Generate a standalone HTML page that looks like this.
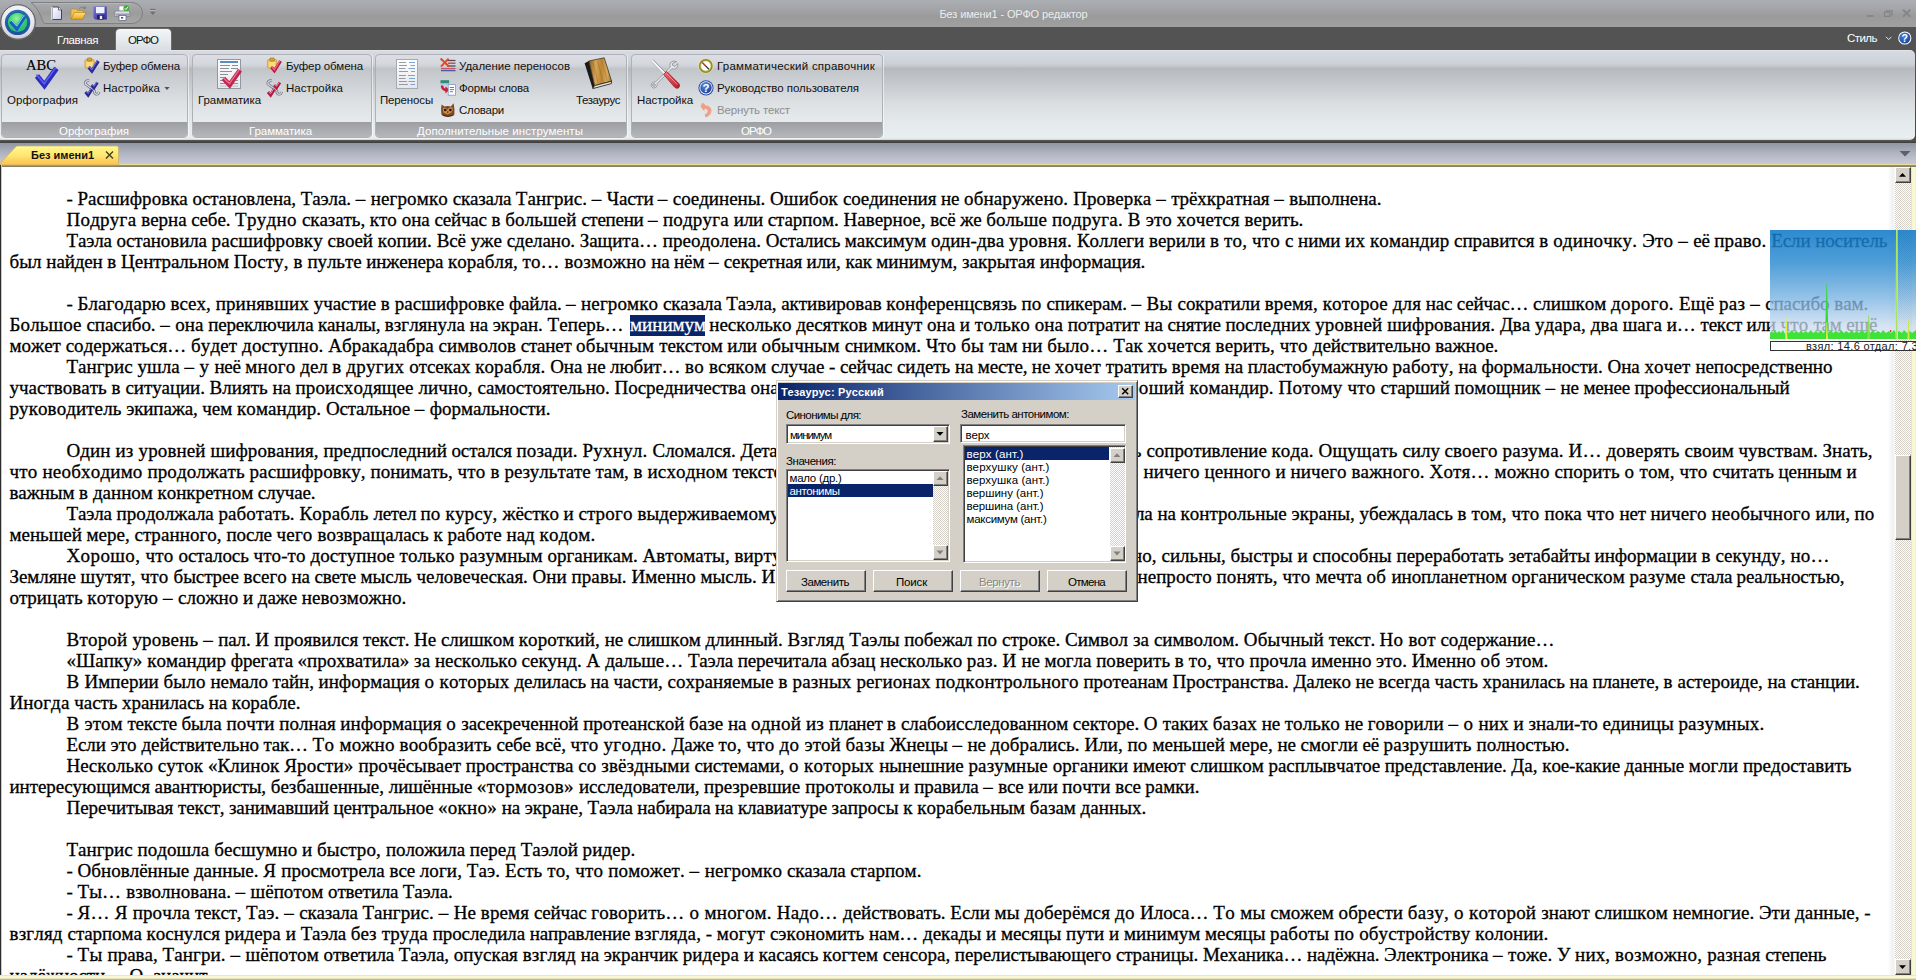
<!DOCTYPE html>
<html lang="ru">
<head>
<meta charset="utf-8">
<title>Без имени1 - ОРФО редактор</title>
<style>
*{box-sizing:border-box}
html,body{margin:0;padding:0}
body{width:1916px;height:980px;overflow:hidden;position:relative;background:#fff;font-family:"Liberation Sans","DejaVu Sans",sans-serif;font-size:11px;color:#000}
.abs{position:absolute}
#title{position:absolute;left:0;top:0;width:1916px;height:27px;background:linear-gradient(#abaeb3 0,#a4a6a9 30%,#9a9a9b 60%,#a0a0a0 100%)}
#band{position:absolute;left:0;top:27px;width:1916px;height:23px;background:#535353}
#ribbon{position:absolute;left:0;top:50px;width:1915px;height:90px;border-radius:0 5px 5px 0;background:linear-gradient(#ececf0 0,#d6dae2 1px,#cdd1d8 13px,#c6cad0 16px,#b6babe 18.5px,#c4c8cd 32px,#d8dcdf 52px,#e4e9eb 72px,#e9eef0 88px,#d0d3d5 90px)}
.grp{position:absolute;top:54px;height:84px;border:1px solid #aeb1b6;border-radius:4px;background:linear-gradient(rgba(255,255,255,.18),rgba(255,255,255,.08));box-shadow:1px 0 0 rgba(255,255,255,.55), 0 1px 0 rgba(255,255,255,.5)}
.grp .lab{position:absolute;left:0;right:0;bottom:0;height:15px;background:linear-gradient(#9c9ea1,#b5b7ba);color:#fff;text-align:center;font-size:11px;line-height:15px;border-radius:0 0 3px 3px}
.rt{position:absolute;white-space:nowrap;font-size:11px;line-height:13px;color:#111}
#sep{position:absolute;left:0;top:140px;width:1916px;height:3px;background:linear-gradient(#5a5a5a,#3a3a3a)}
#strip{position:absolute;left:0;top:143px;width:1916px;height:21px;background:linear-gradient(#9196a3 0,#b1b5c1 50%,#c8cbd6 100%)}
#stripline{position:absolute;left:0;top:164px;width:1916px;height:3px;background:linear-gradient(#efe2a4 0,#e6d796 1px,#9a9273 1px,#878168 2.6px,#f4f2e6 2.6px,#fff 3px)}
#doc{position:absolute;left:0;top:167px;width:1916px;height:813px;background:#fff;overflow:hidden}
.ln{position:absolute;white-space:nowrap;font-family:"Liberation Serif","DejaVu Serif",serif;font-size:19px;line-height:22px;height:22px;color:#000;-webkit-text-stroke:.3px #000;font-kerning:none}
.ln i{display:inline-block;font-style:normal;white-space:nowrap}
.ln b{font-weight:normal;color:#fff;-webkit-text-stroke:.3px #fff;position:relative;left:1.6px}
#sel{position:absolute;left:630px;top:315px;width:75px;height:21px;background:#0a246a}
#lb{position:absolute;left:0;top:165px;width:2px;height:815px;background:linear-gradient(90deg,#2c2c2c 0,#2c2c2c 1.2px,#b8b8b8 1.2px,#e8e8e8 2px)}
#tabact{position:absolute;left:116px;top:29px;width:55px;height:22px;border-radius:4px 4px 0 0;background:linear-gradient(#f4f6f8,#e4e8ec 60%,#d9dde3);box-shadow:0 0 0 1px rgba(255,255,255,.15)}
#ribr{position:absolute;left:1900px;top:49px;width:16px;height:94px;background:linear-gradient(#535353,#484848)}
#dlg{position:absolute;background:#d4d0c8;border:1px solid;border-color:#d4d0c8 #404040 #404040 #d4d0c8;box-shadow:inset 1px 1px 0 #fff, inset -1px -1px 0 #808080}
.b3{position:absolute;background:#d4d0c8;border:1px solid;border-color:#fff #404040 #404040 #fff;box-shadow:inset -1px -1px 0 #808080, inset 1px 1px 0 #d4d0c8}
.sunk{position:absolute;background:#fff;border:1px solid;border-color:#808080 #fff #fff #808080;box-shadow:inset 1px 1px 0 #404040, inset -1px -1px 0 #d4d0c8}
</style>
</head>
<body>
<div id="doc"></div>
<div id="sel"></div>
<div class="ln" id="l0" style="top:188px;left:66.5px;"><i style="width:11.01px;letter-spacing:-0.034px">- </i><i style="width:115.09px;letter-spacing:0.013px">Расшифровка </i><i style="width:108.08px;letter-spacing:-0.096px">остановлена, </i><i style="width:55.04px;letter-spacing:-0.081px">Таэла. </i><i style="width:15.01px;letter-spacing:0.381px">– </i><i style="width:82.06px;letter-spacing:0.129px">негромко </i><i style="width:63.05px;letter-spacing:-0.207px">сказала </i><i style="width:76.06px;letter-spacing:0.051px">Тангрис. </i><i style="width:15.01px;letter-spacing:0.381px">– </i><i style="width:51.04px;letter-spacing:-0.233px">Части </i><i style="width:15.01px;letter-spacing:0.381px">– </i><i style="width:97.07px;letter-spacing:-0.015px">соединены. </i><i style="width:73.06px;letter-spacing:0.198px">Ошибок </i><i style="width:98.07px;letter-spacing:-0.050px">соединения </i><i style="width:23.02px;letter-spacing:-0.111px">не </i><i style="width:109.08px;letter-spacing:0.132px">обнаружено. </i><i style="width:83.06px;letter-spacing:0.114px">Проверка </i><i style="width:15.01px;letter-spacing:0.381px">– </i><i style="width:103.08px;letter-spacing:-0.018px">трёхкратная </i><i style="width:15.01px;letter-spacing:0.381px">– </i><i style="letter-spacing:-0.077px">выполнена.</i></div>
<div class="ln" id="l1" style="top:209px;left:66.5px;"><i style="width:74.82px;letter-spacing:0.244px">Подруга </i><i style="width:49.88px;letter-spacing:-0.063px">верна </i><i style="width:43.89px;letter-spacing:-0.095px">себе. </i><i style="width:66.84px;letter-spacing:0.307px">Трудно </i><i style="width:67.84px;letter-spacing:-0.074px">сказать, </i><i style="width:31.92px;letter-spacing:0.035px">кто </i><i style="width:32.92px;letter-spacing:0.017px">она </i><i style="width:56.86px;letter-spacing:-0.192px">сейчас </i><i style="width:13.97px;letter-spacing:0.122px">в </i><i style="width:75.82px;letter-spacing:0.065px">большей </i><i style="width:66.84px;letter-spacing:-0.252px">степени </i><i style="width:14.96px;letter-spacing:0.357px">– </i><i style="width:70.83px;letter-spacing:0.190px">подруга </i><i style="width:33.92px;letter-spacing:-0.162px">или </i><i style="width:75.82px;letter-spacing:-0.005px">старпом. </i><i style="width:86.79px;letter-spacing:0.013px">Наверное, </i><i style="width:29.93px;letter-spacing:-0.165px">всё </i><i style="width:25.94px;letter-spacing:-0.124px">же </i><i style="width:65.84px;letter-spacing:0.102px">больше </i><i style="width:75.82px;letter-spacing:0.195px">подруга. </i><i style="width:17.96px;letter-spacing:0.267px">В </i><i style="width:30.93px;letter-spacing:0.054px">это </i><i style="width:67.84px;letter-spacing:0.078px">хочется </i><i style="letter-spacing:0.010px">верить.</i></div>
<div class="ln" id="l2" style="top:230px;left:66.5px;"><i style="width:50.03px;letter-spacing:-0.138px">Таэла </i><i style="width:95.05px;letter-spacing:-0.099px">остановила </i><i style="width:116.06px;letter-spacing:0.095px">расшифровку </i><i style="width:50.03px;letter-spacing:-0.038px">своей </i><i style="width:59.03px;letter-spacing:0.043px">копии. </i><i style="width:34.02px;letter-spacing:-0.068px">Всё </i><i style="width:36.02px;letter-spacing:0.052px">уже </i><i style="width:73.04px;letter-spacing:-0.064px">сделано. </i><i style="width:83.05px;letter-spacing:-0.024px">Защита… </i><i style="width:103.06px;letter-spacing:0.023px">преодолена. </i><i style="width:79.04px;letter-spacing:-0.149px">Остались </i><i style="width:86.05px;letter-spacing:-0.060px">максимум </i><i style="width:78.04px;letter-spacing:0.043px">один-два </i><i style="width:68.04px;letter-spacing:0.270px">уровня. </i><i style="width:72.04px;letter-spacing:-0.030px">Коллеги </i><i style="width:61.03px;letter-spacing:-0.063px">верили </i><i style="width:14.01px;letter-spacing:0.143px">в </i><i style="width:28.02px;letter-spacing:0.178px">то, </i><i style="width:33.02px;letter-spacing:0.227px">что </i><i style="width:13.01px;letter-spacing:-0.088px">с </i><i style="width:47.03px;letter-spacing:-0.050px">ними </i><i style="width:25.01px;letter-spacing:0.199px">их </i><i style="width:84.05px;letter-spacing:0.067px">командир </i><i style="width:85.05px;letter-spacing:-0.085px">справится </i><i style="width:14.01px;letter-spacing:0.143px">в </i><i style="width:89.05px;letter-spacing:0.226px">одиночку. </i><i style="width:36.02px;letter-spacing:0.231px">Это </i><i style="width:15.01px;letter-spacing:0.379px">– </i><i style="width:21.01px;letter-spacing:-0.202px">её </i><i style="width:57.03px;letter-spacing:0.137px">право. </i><i style="width:44.02px;letter-spacing:-0.083px">Если </i><i style="letter-spacing:-0.139px">носитель</i></div>
<div class="ln" id="l3" style="top:251px;left:9.5px;"><i style="width:36.87px;letter-spacing:0.052px">был </i><i style="width:60.79px;letter-spacing:-0.143px">найден </i><i style="width:13.95px;letter-spacing:0.115px">в </i><i style="width:112.60px;letter-spacing:-0.045px">Центральном </i><i style="width:59.79px;letter-spacing:0.119px">Посту, </i><i style="width:13.95px;letter-spacing:0.115px">в </i><i style="width:58.79px;letter-spacing:-0.073px">пульте </i><i style="width:81.71px;letter-spacing:-0.163px">инженера </i><i style="width:74.74px;letter-spacing:0.076px">корабля, </i><i style="width:41.85px;letter-spacing:0.075px">то… </i><i style="width:86.69px;letter-spacing:0.183px">возможно </i><i style="width:22.92px;letter-spacing:-0.144px">на </i><i style="width:34.88px;letter-spacing:-0.124px">нём </i><i style="width:14.95px;letter-spacing:0.349px">– </i><i style="width:82.71px;letter-spacing:-0.172px">секретная </i><i style="width:38.86px;letter-spacing:-0.091px">или, </i><i style="width:30.89px;letter-spacing:-0.188px">как </i><i style="width:85.70px;letter-spacing:0.014px">минимум, </i><i style="width:77.73px;letter-spacing:0.007px">закрытая </i><i style="letter-spacing:-0.027px">информация.</i></div>
<div class="ln" id="l4" style="top:293px;left:66.5px;"><i style="width:11.01px;letter-spacing:-0.032px">- </i><i style="width:93.10px;letter-spacing:0.044px">Благодарю </i><i style="width:45.05px;letter-spacing:0.035px">всех, </i><i style="width:98.11px;letter-spacing:0.135px">принявших </i><i style="width:67.07px;letter-spacing:-0.063px">участие </i><i style="width:14.02px;letter-spacing:0.147px">в </i><i style="width:114.13px;letter-spacing:0.022px">расшифровке </i><i style="width:57.06px;letter-spacing:-0.180px">файла. </i><i style="width:15.02px;letter-spacing:0.383px">– </i><i style="width:82.09px;letter-spacing:0.133px">негромко </i><i style="width:63.07px;letter-spacing:-0.204px">сказала </i><i style="width:55.06px;letter-spacing:-0.078px">Таэла, </i><i style="width:105.12px;letter-spacing:-0.024px">активировав </i><i style="width:135.15px;letter-spacing:0.012px">конференцсвязь </i><i style="width:25.03px;letter-spacing:0.203px">по </i><i style="width:85.09px;letter-spacing:-0.080px">спикерам. </i><i style="width:15.02px;letter-spacing:0.383px">– </i><i style="width:31.03px;letter-spacing:0.282px">Вы </i><i style="width:87.10px;letter-spacing:-0.087px">сократили </i><i style="width:58.06px;letter-spacing:0.128px">время, </i><i style="width:70.08px;letter-spacing:0.170px">которое </i><i style="width:33.04px;letter-spacing:0.100px">для </i><i style="width:31.03px;letter-spacing:-0.187px">нас </i><i style="width:76.08px;letter-spacing:-0.140px">сейчас… </i><i style="width:78.09px;letter-spacing:-0.016px">слишком </i><i style="width:68.08px;letter-spacing:0.389px">дорого. </i><i style="width:40.04px;letter-spacing:0.156px">Ещё </i><i style="width:31.03px;letter-spacing:0.211px">раз </i><i style="width:15.02px;letter-spacing:0.383px">– </i><i style="width:69.08px;letter-spacing:-0.059px">спасибо </i><i style="letter-spacing:-0.035px">вам.</i></div>
<div class="ln" id="l5" style="top:314px;left:9.5px;"><i style="width:76.88px;letter-spacing:0.126px">Большое </i><i style="width:73.88px;letter-spacing:-0.047px">спасибо. </i><i style="width:14.98px;letter-spacing:0.363px">– </i><i style="width:32.95px;letter-spacing:0.024px">она </i><i style="width:109.82px;letter-spacing:-0.167px">переключила </i><i style="width:66.89px;letter-spacing:-0.140px">каналы, </i><i style="width:84.86px;letter-spacing:0.004px">взглянула </i><i style="width:22.96px;letter-spacing:-0.129px">на </i><i style="width:54.91px;letter-spacing:-0.011px">экран. </i><i style="width:80.87px;letter-spacing:0.039px">Теперь… </i><i style="width:80.87px;letter-spacing:0.006px"><b>минимум</b> </i><i style="width:86.86px;letter-spacing:-0.053px">несколько </i><i style="width:75.88px;letter-spacing:-0.017px">десятков </i><i style="width:54.91px;">минут </i><i style="width:32.95px;letter-spacing:0.024px">она </i><i style="width:14.98px;letter-spacing:0.029px">и </i><i style="width:59.90px;letter-spacing:0.068px">только </i><i style="width:32.95px;letter-spacing:0.024px">она </i><i style="width:76.88px;letter-spacing:-0.061px">потратит </i><i style="width:22.96px;letter-spacing:-0.129px">на </i><i style="width:57.91px;letter-spacing:-0.155px">снятие </i><i style="width:89.86px;letter-spacing:-0.041px">последних </i><i style="width:71.88px;letter-spacing:0.112px">уровней </i><i style="width:112.82px;letter-spacing:0.061px">шифрования. </i><i style="width:34.94px;letter-spacing:-0.043px">Два </i><i style="width:55.91px;letter-spacing:0.125px">удара, </i><i style="width:31.95px;letter-spacing:0.032px">два </i><i style="width:43.93px;letter-spacing:-0.022px">шага </i><i style="width:33.95px;letter-spacing:0.009px">и… </i><i style="width:45.93px;letter-spacing:-0.255px">текст </i><i style="width:33.95px;letter-spacing:-0.155px">или </i><i style="width:32.95px;letter-spacing:0.210px">что </i><i style="width:32.95px;letter-spacing:-0.141px">там </i><i style="letter-spacing:-0.182px">ещё</i></div>
<div class="ln" id="l6" style="top:335px;left:9.5px;"><i style="width:56.15px;">может </i><i style="width:125.34px;letter-spacing:0.027px">содержаться… </i><i style="width:51.14px;letter-spacing:0.136px">будет </i><i style="width:86.23px;letter-spacing:0.149px">доступно. </i><i style="width:110.30px;letter-spacing:0.072px">Абракадабра </i><i style="width:82.22px;letter-spacing:0.047px">символов </i><i style="width:55.15px;letter-spacing:-0.239px">станет </i><i style="width:83.22px;letter-spacing:0.254px">обычным </i><i style="width:68.18px;letter-spacing:-0.099px">текстом </i><i style="width:34.09px;letter-spacing:-0.119px">или </i><i style="width:83.22px;letter-spacing:0.254px">обычным </i><i style="width:81.22px;letter-spacing:0.019px">снимком. </i><i style="width:35.09px;letter-spacing:0.048px">Что </i><i style="width:28.08px;letter-spacing:0.298px">бы </i><i style="width:33.09px;letter-spacing:-0.105px">там </i><i style="width:25.07px;letter-spacing:-0.006px">ни </i><i style="width:66.18px;letter-spacing:0.169px">было… </i><i style="width:34.09px;letter-spacing:0.018px">Так </i><i style="width:68.18px;letter-spacing:0.121px">хочется </i><i style="width:64.17px;letter-spacing:0.079px">верить, </i><i style="width:33.09px;letter-spacing:0.245px">что </i><i style="width:122.33px;letter-spacing:-0.080px">действительно </i><i style="letter-spacing:-0.030px">важное.</i></div>
<div class="ln" id="l7" style="top:356px;left:66.5px;"><i style="width:70.96px;letter-spacing:0.014px">Тангрис </i><i style="width:46.97px;letter-spacing:0.036px">ушла </i><i style="width:14.99px;letter-spacing:0.371px">– </i><i style="width:14.99px;letter-spacing:0.371px">у </i><i style="width:30.98px;letter-spacing:-0.200px">неё </i><i style="width:54.97px;letter-spacing:0.206px">много </i><i style="width:31.98px;letter-spacing:-0.087px">дел </i><i style="width:13.99px;letter-spacing:0.135px">в </i><i style="width:62.96px;letter-spacing:0.298px">других </i><i style="width:65.96px;letter-spacing:-0.078px">отсеках </i><i style="width:74.96px;letter-spacing:0.101px">корабля. </i><i style="width:36.98px;letter-spacing:-0.023px">Она </i><i style="width:22.99px;letter-spacing:-0.121px">не </i><i style="width:74.96px;letter-spacing:-0.087px">любит… </i><i style="width:23.99px;letter-spacing:0.255px">во </i><i style="width:61.96px;letter-spacing:0.045px">всяком </i><i style="width:57.97px;letter-spacing:-0.088px">случае </i><i style="width:10.99px;letter-spacing:-0.042px">- </i><i style="width:56.97px;letter-spacing:-0.177px">сейчас </i><i style="width:57.97px;letter-spacing:-0.065px">сидеть </i><i style="width:22.99px;letter-spacing:-0.121px">на </i><i style="width:53.97px;letter-spacing:-0.165px">месте, </i><i style="width:22.99px;letter-spacing:-0.121px">не </i><i style="width:50.97px;letter-spacing:0.155px">хочет </i><i style="width:65.96px;letter-spacing:-0.058px">тратить </i><i style="width:52.97px;letter-spacing:0.092px">время </i><i style="width:22.99px;letter-spacing:-0.121px">на </i><i style="width:144.92px;letter-spacing:-0.051px">пластобумажную </i><i style="width:65.96px;letter-spacing:0.195px">работу, </i><i style="width:22.99px;letter-spacing:-0.121px">на </i><i style="width:125.93px;letter-spacing:-0.004px">формальности. </i><i style="width:36.98px;letter-spacing:-0.023px">Она </i><i style="width:50.97px;letter-spacing:0.155px">хочет </i><i style="letter-spacing:-0.090px">непосредственно</i></div>
<div class="ln" id="l8" style="top:377px;left:9.5px;"><i style="width:102.00px;letter-spacing:0.015px">участвовать </i><i style="width:14.00px;letter-spacing:0.139px">в </i><i style="width:84.00px;letter-spacing:-0.084px">ситуации. </i><i style="width:63.00px;letter-spacing:0.031px">Влиять </i><i style="width:23.00px;letter-spacing:-0.117px">на </i><i style="width:123.00px;letter-spacing:0.121px">происходящее </i><i style="width:59.00px;letter-spacing:0.090px">лично, </i><i style="width:137.00px;letter-spacing:-0.026px">самостоятельно. </i><i style="width:136.00px;letter-spacing:-0.031px">Посредничества </i><i style="width:33.00px;letter-spacing:0.037px">она </i><i style="letter-spacing:-0.301px">не</i></div>
<div class="ln" id="l9" style="top:377px;left:1109.5px;"><i style="width:80.00px;letter-spacing:0.285px">хороший </i><i style="width:89.00px;letter-spacing:0.081px">командир. </i><i style="width:69.00px;letter-spacing:0.243px">Потому </i><i style="width:33.00px;letter-spacing:0.223px">что </i><i style="width:74.00px;letter-spacing:-0.048px">старший </i><i style="width:91.00px;letter-spacing:0.096px">помощник </i><i style="width:15.00px;letter-spacing:0.375px">– </i><i style="width:23.00px;letter-spacing:-0.117px">не </i><i style="width:51.00px;letter-spacing:-0.207px">менее </i><i style="letter-spacing:-0.081px">профессиональный</i></div>
<div class="ln" id="l10" style="top:398px;left:9.5px;"><i style="width:116.78px;letter-spacing:0.086px">руководитель </i><i style="width:75.86px;letter-spacing:-0.151px">экипажа, </i><i style="width:34.94px;letter-spacing:0.043px">чем </i><i style="width:88.84px;letter-spacing:0.065px">командир. </i><i style="width:88.84px;letter-spacing:-0.105px">Остальное </i><i style="width:14.97px;letter-spacing:0.361px">– </i><i style="letter-spacing:-0.035px">формальности.</i></div>
<div class="ln" id="l11" style="top:440px;left:66.5px;"><i style="width:49.00px;letter-spacing:0.105px">Один </i><i style="width:23.00px;letter-spacing:0.192px">из </i><i style="width:72.00px;letter-spacing:0.126px">уровней </i><i style="width:113.00px;letter-spacing:0.076px">шифрования, </i><i style="width:128.00px;letter-spacing:-0.050px">предпоследний </i><i style="width:65.00px;letter-spacing:-0.134px">остался </i><i style="width:66.00px;letter-spacing:0.132px">позади. </i><i style="width:70.00px;letter-spacing:0.223px">Рухнул. </i><i style="width:88.00px;letter-spacing:-0.026px">Сломался. </i><i style="letter-spacing:-0.282px">Дета</i></div>
<div class="ln" id="l12" style="top:440px;left:1066.5px;"><i style="width:80.00px;letter-spacing:0.198px">ощущать </i><i style="width:125.00px;letter-spacing:-0.070px">сопротивление </i><i style="width:47.00px;letter-spacing:0.111px">кода. </i><i style="width:84.00px;letter-spacing:0.171px">Ощущать </i><i style="width:42.00px;letter-spacing:-0.067px">силу </i><i style="width:58.00px;letter-spacing:0.089px">своего </i><i style="width:66.00px;letter-spacing:0.138px">разума. </i><i style="width:38.00px;letter-spacing:0.176px">И… </i><i style="width:78.00px;letter-spacing:0.163px">доверять </i><i style="width:54.00px;letter-spacing:0.026px">своим </i><i style="width:84.00px;letter-spacing:0.031px">чувствам. </i><i style="letter-spacing:0.027px">Знать,</i></div>
<div class="ln" id="l13" style="top:461px;left:9.5px;"><i style="width:33.00px;letter-spacing:0.223px">что </i><i style="width:105.00px;letter-spacing:0.193px">необходимо </i><i style="width:102.00px;letter-spacing:0.082px">продолжать </i><i style="width:121.00px;letter-spacing:0.102px">расшифровку, </i><i style="width:87.00px;letter-spacing:0.007px">понимать, </i><i style="width:33.00px;letter-spacing:0.223px">что </i><i style="width:14.00px;letter-spacing:0.139px">в </i><i style="width:91.00px;letter-spacing:-0.028px">результате </i><i style="width:38.00px;letter-spacing:-0.052px">там, </i><i style="width:14.00px;letter-spacing:0.139px">в </i><i style="width:85.00px;letter-spacing:0.143px">исходном </i><i style="letter-spacing:-0.356px">тексте</i></div>
<div class="ln" id="l14" style="top:461px;left:1143.5px;"><i style="width:61.00px;letter-spacing:0.090px">ничего </i><i style="width:71.00px;letter-spacing:0.065px">ценного </i><i style="width:15.00px;letter-spacing:0.041px">и </i><i style="width:61.00px;letter-spacing:0.090px">ничего </i><i style="width:78.00px;letter-spacing:0.112px">важного. </i><i style="width:65.00px;letter-spacing:0.164px">Хотя… </i><i style="width:60.00px;letter-spacing:0.155px">можно </i><i style="width:70.00px;letter-spacing:0.064px">спорить </i><i style="width:15.00px;letter-spacing:0.375px">о </i><i style="width:40.00px;letter-spacing:0.135px">том, </i><i style="width:33.00px;letter-spacing:0.223px">что </i><i style="width:66.00px;letter-spacing:-0.076px">считать </i><i style="width:68.00px;letter-spacing:-0.068px">ценным </i><i style="letter-spacing:-0.168px">и</i></div>
<div class="ln" id="l15" style="top:482px;left:9.5px;"><i style="width:69.55px;letter-spacing:-0.099px">важным </i><i style="width:13.91px;letter-spacing:0.094px">в </i><i style="width:64.58px;letter-spacing:-0.019px">данном </i><i style="width:100.34px;letter-spacing:-0.042px">конкретном </i><i style="letter-spacing:-0.138px">случае.</i></div>
<div class="ln" id="l16" style="top:503px;left:66.5px;"><i style="width:50.00px;letter-spacing:-0.143px">Таэла </i><i style="width:102.00px;">продолжала </i><i style="width:81.00px;letter-spacing:0.070px">работать. </i><i style="width:74.00px;letter-spacing:0.166px">Корабль </i><i style="width:47.00px;letter-spacing:-0.314px">летел </i><i style="width:25.00px;letter-spacing:0.194px">по </i><i style="width:57.00px;letter-spacing:0.191px">курсу, </i><i style="width:61.00px;letter-spacing:-0.111px">жёстко </i><i style="width:15.00px;letter-spacing:0.041px">и </i><i style="width:59.00px;letter-spacing:0.174px">строго </i><i style="letter-spacing:0.035px">выдерживаемому</i></div>
<div class="ln" id="l17" style="top:503px;left:1049.5px;"><i style="width:108.00px;letter-spacing:-0.015px">поглядывала </i><i style="width:23.00px;letter-spacing:-0.117px">на </i><i style="width:111.00px;letter-spacing:0.045px">контрольные </i><i style="width:68.00px;letter-spacing:0.031px">экраны, </i><i style="width:98.00px;letter-spacing:-0.054px">убеждалась </i><i style="width:14.00px;letter-spacing:0.139px">в </i><i style="width:40.00px;letter-spacing:0.135px">том, </i><i style="width:33.00px;letter-spacing:0.223px">что </i><i style="width:42.00px;letter-spacing:-0.016px">пока </i><i style="width:33.00px;letter-spacing:0.223px">что </i><i style="width:31.00px;letter-spacing:-0.164px">нет </i><i style="width:61.00px;letter-spacing:0.090px">ничего </i><i style="width:104.00px;letter-spacing:0.200px">необычного </i><i style="width:39.00px;letter-spacing:-0.063px">или, </i><i style="letter-spacing:0.166px">по</i></div>
<div class="ln" id="l18" style="top:524px;left:9.5px;"><i style="width:77.00px;letter-spacing:-0.034px">меньшей </i><i style="width:48.00px;letter-spacing:0.018px">мере, </i><i style="width:92.00px;letter-spacing:0.064px">странного, </i><i style="width:50.00px;letter-spacing:-0.128px">после </i><i style="width:41.00px;letter-spacing:0.194px">чего </i><i style="width:116.00px;letter-spacing:0.023px">возвращалась </i><i style="width:14.00px;letter-spacing:0.010px">к </i><i style="width:59.00px;letter-spacing:0.059px">работе </i><i style="width:33.00px;letter-spacing:-0.005px">над </i><i style="letter-spacing:0.221px">кодом.</i></div>
<div class="ln" id="l19" style="top:545px;left:66.5px;"><i style="width:79.00px;letter-spacing:0.394px">Хорошо, </i><i style="width:33.00px;letter-spacing:0.223px">что </i><i style="width:75.00px;letter-spacing:-0.055px">осталось </i><i style="width:57.00px;letter-spacing:0.109px">что-то </i><i style="width:89.00px;letter-spacing:0.058px">доступное </i><i style="width:60.00px;letter-spacing:0.081px">только </i><i style="width:88.00px;letter-spacing:0.148px">разумным </i><i style="width:95.00px;letter-spacing:0.023px">органикам. </i><i style="width:92.00px;letter-spacing:0.048px">Автоматы, </i><i style="letter-spacing:0.112px">вирту</i></div>
<div class="ln" id="l20" style="top:545px;left:1084.5px;"><i style="width:77.00px;letter-spacing:0.105px">конечно, </i><i style="width:69.00px;letter-spacing:-0.023px">сильны, </i><i style="width:67.00px;letter-spacing:0.116px">быстры </i><i style="width:15.00px;letter-spacing:0.041px">и </i><i style="width:84.00px;letter-spacing:0.068px">способны </i><i style="width:112.00px;letter-spacing:-0.007px">переработать </i><i style="width:86.00px;letter-spacing:-0.076px">зетабайты </i><i style="width:107.00px;letter-spacing:-0.032px">информации </i><i style="width:14.00px;letter-spacing:0.139px">в </i><i style="width:75.00px;letter-spacing:0.063px">секунду, </i><i style="letter-spacing:0.111px">но…</i></div>
<div class="ln" id="l21" style="top:566px;left:9.5px;"><i style="width:71.00px;letter-spacing:-0.068px">Земляне </i><i style="width:60.00px;letter-spacing:0.146px">шутят, </i><i style="width:33.00px;letter-spacing:0.223px">что </i><i style="width:70.00px;letter-spacing:-0.036px">быстрее </i><i style="width:48.00px;letter-spacing:0.020px">всего </i><i style="width:23.00px;letter-spacing:-0.117px">на </i><i style="width:46.00px;letter-spacing:-0.221px">свете </i><i style="width:56.00px;letter-spacing:-0.020px">мысль </i><i style="width:116.00px;letter-spacing:-0.050px">человеческая. </i><i style="width:39.00px;letter-spacing:0.048px">Они </i><i style="width:60.00px;letter-spacing:0.095px">правы. </i><i style="width:69.00px;letter-spacing:0.034px">Именно </i><i style="width:61.00px;letter-spacing:0.019px">мысль. </i><i style="letter-spacing:0.279px">И</i></div>
<div class="ln" id="l22" style="top:566px;left:1085.5px;"><i style="width:52.00px;letter-spacing:0.155px">очень </i><i style="width:79.00px;letter-spacing:0.027px">непросто </i><i style="width:66.00px;letter-spacing:0.120px">понять, </i><i style="width:33.00px;letter-spacing:0.223px">что </i><i style="width:51.00px;letter-spacing:-0.083px">мечта </i><i style="width:25.00px;letter-spacing:0.361px">об </i><i style="width:120.00px;letter-spacing:-0.097px">инопланетном </i><i style="width:118.00px;letter-spacing:0.039px">органическом </i><i style="width:61.00px;letter-spacing:0.122px">разуме </i><i style="width:46.00px;letter-spacing:-0.306px">стала </i><i style="letter-spacing:-0.044px">реальностью,</i></div>
<div class="ln" id="l23" style="top:587px;left:9.5px;"><i style="width:77.80px;">отрицать </i><i style="width:75.81px;letter-spacing:0.166px">которую </i><i style="width:14.96px;letter-spacing:0.356px">– </i><i style="width:64.84px;letter-spacing:-0.018px">сложно </i><i style="width:14.96px;letter-spacing:0.022px">и </i><i style="width:43.89px;letter-spacing:-0.104px">даже </i><i style="letter-spacing:0.099px">невозможно.</i></div>
<div class="ln" id="l24" style="top:629px;left:66.5px;"><i style="width:65.91px;letter-spacing:0.217px">Второй </i><i style="width:70.90px;letter-spacing:0.177px">уровень </i><i style="width:14.98px;letter-spacing:0.365px">– </i><i style="width:36.95px;letter-spacing:-0.126px">пал. </i><i style="width:18.97px;letter-spacing:0.252px">И </i><i style="width:88.88px;letter-spacing:0.043px">проявился </i><i style="width:50.93px;letter-spacing:-0.182px">текст. </i><i style="width:26.96px;letter-spacing:0.020px">Не </i><i style="width:77.90px;letter-spacing:-0.040px">слишком </i><i style="width:85.88px;letter-spacing:0.078px">короткий, </i><i style="width:22.97px;letter-spacing:-0.127px">не </i><i style="width:77.90px;letter-spacing:-0.040px">слишком </i><i style="width:81.89px;letter-spacing:-0.022px">длинный. </i><i style="width:61.92px;letter-spacing:0.187px">Взгляд </i><i style="width:54.93px;letter-spacing:-0.044px">Таэлы </i><i style="width:72.90px;letter-spacing:-0.082px">побежал </i><i style="width:24.97px;letter-spacing:0.183px">по </i><i style="width:62.92px;">строке. </i><i style="width:67.91px;letter-spacing:0.049px">Символ </i><i style="width:20.97px;letter-spacing:0.094px">за </i><i style="width:89.88px;letter-spacing:0.028px">символом. </i><i style="width:84.89px;letter-spacing:0.166px">Обычный </i><i style="width:50.93px;letter-spacing:-0.182px">текст. </i><i style="width:28.96px;letter-spacing:0.330px">Но </i><i style="width:31.96px;letter-spacing:0.108px">вот </i><i style="letter-spacing:-0.092px">содержание…</i></div>
<div class="ln" id="l25" style="top:650px;left:66.5px;"><i style="width:80.67px;letter-spacing:0.053px">«Шапку» </i><i style="width:83.66px;letter-spacing:0.025px">командир </i><i style="width:66.73px;letter-spacing:-0.153px">фрегата </i><i style="width:116.53px;letter-spacing:0.025px">«прохватила» </i><i style="width:20.92px;letter-spacing:0.076px">за </i><i style="width:86.65px;letter-spacing:-0.074px">несколько </i><i style="width:64.74px;letter-spacing:-0.024px">секунд. </i><i style="width:18.92px;letter-spacing:0.226px">А </i><i style="width:82.67px;letter-spacing:-0.049px">дальше… </i><i style="width:49.80px;letter-spacing:-0.177px">Таэла </i><i style="width:93.62px;letter-spacing:-0.185px">перечитала </i><i style="width:48.80px;letter-spacing:-0.026px">абзац </i><i style="width:86.65px;letter-spacing:-0.074px">несколько </i><i style="width:35.85px;letter-spacing:0.183px">раз. </i><i style="width:18.92px;letter-spacing:0.226px">И </i><i style="width:22.91px;letter-spacing:-0.148px">не </i><i style="width:51.79px;letter-spacing:-0.032px">могла </i><i style="width:78.68px;letter-spacing:0.025px">поверить </i><i style="width:13.94px;letter-spacing:0.111px">в </i><i style="width:27.89px;letter-spacing:0.146px">то, </i><i style="width:32.87px;letter-spacing:0.190px">что </i><i style="width:61.75px;letter-spacing:0.052px">прочла </i><i style="width:64.74px;letter-spacing:-0.068px">именно </i><i style="width:35.85px;letter-spacing:0.079px">это. </i><i style="width:68.72px;letter-spacing:-0.006px">Именно </i><i style="width:24.90px;letter-spacing:0.327px">об </i><i style="letter-spacing:0.019px">этом.</i></div>
<div class="ln" id="l26" style="top:671px;left:66.5px;"><i style="width:18.00px;letter-spacing:0.289px">В </i><i style="width:79.00px;letter-spacing:0.009px">Империи </i><i style="width:47.00px;letter-spacing:0.167px">было </i><i style="width:62.00px;letter-spacing:-0.113px">немало </i><i style="width:46.00px;letter-spacing:-0.095px">тайн, </i><i style="width:106.00px;letter-spacing:0.006px">информация </i><i style="width:15.00px;letter-spacing:0.375px">о </i><i style="width:75.00px;letter-spacing:0.244px">которых </i><i style="width:76.00px;letter-spacing:-0.168px">делилась </i><i style="width:23.00px;letter-spacing:-0.117px">на </i><i style="width:54.00px;letter-spacing:-0.056px">части, </i><i style="width:111.00px;letter-spacing:0.027px">сохраняемые </i><i style="width:14.00px;letter-spacing:0.139px">в </i><i style="width:64.00px;letter-spacing:0.197px">разных </i><i style="width:79.00px;letter-spacing:0.084px">регионах </i><i style="width:148.00px;letter-spacing:0.163px">подконтрольного </i><i style="width:89.00px;letter-spacing:-0.071px">протеанам </i><i style="width:121.00px;letter-spacing:-0.014px">Пространства. </i><i style="width:62.00px;letter-spacing:-0.113px">Далеко </i><i style="width:23.00px;letter-spacing:-0.117px">не </i><i style="width:56.00px;letter-spacing:-0.069px">всегда </i><i style="width:48.00px;letter-spacing:-0.023px">часть </i><i style="width:87.00px;letter-spacing:-0.053px">хранилась </i><i style="width:23.00px;letter-spacing:-0.117px">на </i><i style="width:71.00px;letter-spacing:-0.213px">планете, </i><i style="width:14.00px;letter-spacing:0.139px">в </i><i style="width:90.00px;letter-spacing:-0.034px">астероиде, </i><i style="width:23.00px;letter-spacing:-0.117px">на </i><i style="letter-spacing:-0.199px">станции.</i></div>
<div class="ln" id="l27" style="top:692px;left:9.5px;"><i style="width:64.78px;letter-spacing:0.106px">Иногда </i><i style="width:47.84px;letter-spacing:-0.051px">часть </i><i style="width:86.70px;letter-spacing:-0.083px">хранилась </i><i style="width:22.92px;letter-spacing:-0.143px">на </i><i style="letter-spacing:-0.029px">корабле.</i></div>
<div class="ln" id="l28" style="top:713px;left:66.5px;"><i style="width:17.99px;letter-spacing:0.283px">В </i><i style="width:42.97px;letter-spacing:0.049px">этом </i><i style="width:53.97px;letter-spacing:-0.274px">тексте </i><i style="width:44.97px;letter-spacing:-0.025px">была </i><i style="width:52.97px;letter-spacing:0.087px">почти </i><i style="width:60.96px;letter-spacing:-0.039px">полная </i><i style="width:105.94px;">информация </i><i style="width:14.99px;letter-spacing:0.371px">о </i><i style="width:121.93px;letter-spacing:-0.056px">засекреченной </i><i style="width:105.94px;letter-spacing:-0.054px">протеанской </i><i style="width:38.98px;letter-spacing:0.038px">базе </i><i style="width:22.99px;letter-spacing:-0.122px">на </i><i style="width:54.97px;letter-spacing:0.202px">одной </i><i style="width:22.99px;letter-spacing:0.188px">из </i><i style="width:57.97px;letter-spacing:-0.253px">планет </i><i style="width:13.99px;letter-spacing:0.135px">в </i><i style="width:171.90px;letter-spacing:-0.092px">слабоисследованном </i><i style="width:70.96px;letter-spacing:-0.042px">секторе. </i><i style="width:18.99px;letter-spacing:0.259px">О </i><i style="width:49.97px;letter-spacing:-0.069px">таких </i><i style="width:48.97px;letter-spacing:0.114px">базах </i><i style="width:22.99px;letter-spacing:-0.122px">не </i><i style="width:59.96px;letter-spacing:0.076px">только </i><i style="width:22.99px;letter-spacing:-0.122px">не </i><i style="width:80.95px;letter-spacing:0.125px">говорили </i><i style="width:14.99px;letter-spacing:0.371px">– </i><i style="width:14.99px;letter-spacing:0.371px">о </i><i style="width:34.98px;letter-spacing:0.098px">них </i><i style="width:14.99px;letter-spacing:0.037px">и </i><i style="width:73.96px;letter-spacing:-0.076px">знали-то </i><i style="width:75.96px;letter-spacing:-0.042px">единицы </i><i style="letter-spacing:0.200px">разумных.</i></div>
<div class="ln" id="l29" style="top:734px;left:66.5px;"><i style="width:44.00px;letter-spacing:-0.088px">Если </i><i style="width:31.00px;letter-spacing:0.073px">это </i><i style="width:122.00px;letter-spacing:-0.103px">действительно </i><i style="width:49.00px;letter-spacing:-0.143px">так… </i><i style="width:27.00px;letter-spacing:0.381px">То </i><i style="width:60.00px;letter-spacing:0.155px">можно </i><i style="width:97.00px;letter-spacing:0.185px">вообразить </i><i style="width:39.00px;letter-spacing:-0.143px">себе </i><i style="width:35.00px;letter-spacing:-0.067px">всё, </i><i style="width:33.00px;letter-spacing:0.223px">что </i><i style="width:68.00px;letter-spacing:0.297px">угодно. </i><i style="width:47.00px;letter-spacing:-0.141px">Даже </i><i style="width:28.00px;letter-spacing:0.174px">то, </i><i style="width:33.00px;letter-spacing:0.223px">что </i><i style="width:25.00px;letter-spacing:0.361px">до </i><i style="width:41.00px;letter-spacing:0.025px">этой </i><i style="width:44.00px;letter-spacing:0.176px">базы </i><i style="width:63.00px;letter-spacing:-0.051px">Жнецы </i><i style="width:15.00px;letter-spacing:0.375px">– </i><i style="width:23.00px;letter-spacing:-0.117px">не </i><i style="width:94.00px;letter-spacing:0.090px">добрались. </i><i style="width:43.00px;letter-spacing:0.026px">Или, </i><i style="width:25.00px;letter-spacing:0.194px">по </i><i style="width:77.00px;letter-spacing:-0.034px">меньшей </i><i style="width:48.00px;letter-spacing:0.018px">мере, </i><i style="width:23.00px;letter-spacing:-0.117px">не </i><i style="width:62.00px;letter-spacing:-0.021px">смогли </i><i style="width:21.00px;letter-spacing:-0.205px">её </i><i style="width:93.00px;letter-spacing:0.204px">разрушить </i><i style="letter-spacing:-0.016px">полностью.</i></div>
<div class="ln" id="l30" style="top:755px;left:66.5px;"><i style="width:91.31px;letter-spacing:0.036px">Несколько </i><i style="width:50.17px;letter-spacing:0.075px">суток </i><i style="width:76.26px;letter-spacing:0.098px">«Клинок </i><i style="width:74.25px;letter-spacing:0.178px">Ярости» </i><i style="width:107.36px;letter-spacing:0.010px">прочёсывает </i><i style="width:112.38px;letter-spacing:-0.040px">пространства </i><i style="width:23.08px;letter-spacing:0.131px">со </i><i style="width:93.31px;letter-spacing:0.136px">звёздными </i><i style="width:94.32px;letter-spacing:-0.146px">системами, </i><i style="width:15.05px;letter-spacing:0.400px">о </i><i style="width:75.25px;letter-spacing:0.275px">которых </i><i style="width:89.30px;letter-spacing:-0.043px">нынешние </i><i style="width:84.28px;letter-spacing:0.134px">разумные </i><i style="width:80.27px;letter-spacing:0.062px">органики </i><i style="width:57.19px;letter-spacing:-0.113px">имеют </i><i style="width:78.26px;letter-spacing:0.006px">слишком </i><i style="width:116.39px;letter-spacing:-0.026px">расплывчатое </i><i style="width:126.42px;letter-spacing:-0.111px">представление. </i><i style="width:31.10px;letter-spacing:0.053px">Да, </i><i style="width:82.28px;letter-spacing:-0.146px">кое-какие </i><i style="width:64.22px;letter-spacing:-0.024px">данные </i><i style="width:54.18px;letter-spacing:0.078px">могли </i><i style="letter-spacing:-0.015px">предоставить</i></div>
<div class="ln" id="l31" style="top:776px;left:9.5px;"><i style="width:145.12px;letter-spacing:-0.050px">интересующимся </i><i style="width:116.10px;letter-spacing:-0.083px">авантюристы, </i><i style="width:118.10px;letter-spacing:0.023px">безбашенные, </i><i style="width:88.07px;letter-spacing:-0.103px">лишённые </i><i style="width:102.09px;letter-spacing:0.321px">«тормозов» </i><i style="width:125.11px;letter-spacing:-0.153px">исследователи, </i><i style="width:101.08px;letter-spacing:0.054px">презревшие </i><i style="width:94.08px;letter-spacing:0.138px">протоколы </i><i style="width:15.01px;letter-spacing:0.047px">и </i><i style="width:69.06px;letter-spacing:-0.106px">правила </i><i style="width:15.01px;letter-spacing:0.381px">– </i><i style="width:30.03px;letter-spacing:-0.141px">все </i><i style="width:34.03px;letter-spacing:-0.135px">или </i><i style="width:53.04px;letter-spacing:0.100px">почти </i><i style="width:30.03px;letter-spacing:-0.141px">все </i><i style="letter-spacing:-0.010px">рамки.</i></div>
<div class="ln" id="l32" style="top:797px;left:66.5px;"><i style="width:111.59px;letter-spacing:-0.016px">Перечитывая </i><i style="width:50.81px;letter-spacing:-0.199px">текст, </i><i style="width:104.61px;letter-spacing:-0.073px">занимавший </i><i style="width:104.61px;letter-spacing:-0.116px">центральное </i><i style="width:63.76px;letter-spacing:0.231px">«окно» </i><i style="width:22.92px;letter-spacing:-0.145px">на </i><i style="width:62.77px;letter-spacing:-0.082px">экране, </i><i style="width:49.82px;letter-spacing:-0.174px">Таэла </i><i style="width:77.71px;letter-spacing:-0.147px">набирала </i><i style="width:22.92px;letter-spacing:-0.145px">на </i><i style="width:93.65px;letter-spacing:-0.141px">клавиатуре </i><i style="width:71.73px;letter-spacing:0.085px">запросы </i><i style="width:13.95px;letter-spacing:-0.016px">к </i><i style="width:112.58px;">корабельным </i><i style="width:50.81px;">базам </i><i style="letter-spacing:0.044px">данных.</i></div>
<div class="ln" id="l33" style="top:839px;left:66.5px;"><i style="width:70.88px;">Тангрис </i><i style="width:76.86px;letter-spacing:0.092px">подошла </i><i style="width:87.85px;letter-spacing:0.082px">бесшумно </i><i style="width:14.97px;letter-spacing:0.028px">и </i><i style="width:68.88px;letter-spacing:0.151px">быстро, </i><i style="width:83.85px;letter-spacing:-0.084px">положила </i><i style="width:50.91px;letter-spacing:-0.007px">перед </i><i style="width:61.89px;letter-spacing:-0.029px">Таэлой </i><i style="letter-spacing:0.148px">ридер.</i></div>
<div class="ln" id="l34" style="top:860px;left:66.5px;"><i style="width:11.04px;letter-spacing:-0.019px">- </i><i style="width:116.41px;letter-spacing:0.015px">Обновлённые </i><i style="width:69.24px;letter-spacing:0.014px">данные. </i><i style="width:18.06px;letter-spacing:0.320px">Я </i><i style="width:108.38px;letter-spacing:0.030px">просмотрела </i><i style="width:30.11px;letter-spacing:-0.120px">все </i><i style="width:47.17px;letter-spacing:0.121px">логи, </i><i style="width:38.13px;letter-spacing:0.088px">Таэ. </i><i style="width:42.15px;letter-spacing:0.078px">Есть </i><i style="width:28.10px;letter-spacing:0.199px">то, </i><i style="width:33.12px;letter-spacing:0.252px">что </i><i style="width:81.29px;letter-spacing:0.081px">поможет. </i><i style="width:15.05px;letter-spacing:0.401px">– </i><i style="width:82.29px;letter-spacing:0.154px">негромко </i><i style="width:63.22px;letter-spacing:-0.185px">сказала </i><i style="letter-spacing:0.017px">старпом.</i></div>
<div class="ln" id="l35" style="top:881px;left:66.5px;"><i style="width:10.94px;letter-spacing:-0.067px">- </i><i style="width:48.75px;letter-spacing:0.156px">Ты… </i><i style="width:109.43px;letter-spacing:-0.013px">взволнована. </i><i style="width:14.92px;letter-spacing:0.336px">– </i><i style="width:77.60px;letter-spacing:0.036px">шёпотом </i><i style="width:74.61px;letter-spacing:-0.192px">ответила </i><i style="letter-spacing:-0.186px">Таэла.</i></div>
<div class="ln" id="l36" style="top:902px;left:66.5px;"><i style="width:11.04px;letter-spacing:-0.020px">- </i><i style="width:37.12px;letter-spacing:0.234px">Я… </i><i style="width:18.06px;letter-spacing:0.319px">Я </i><i style="width:62.21px;letter-spacing:0.117px">прочла </i><i style="width:51.17px;letter-spacing:-0.148px">текст, </i><i style="width:38.13px;letter-spacing:0.087px">Таэ. </i><i style="width:15.05px;letter-spacing:0.400px">– </i><i style="width:63.21px;letter-spacing:-0.186px">сказала </i><i style="width:76.25px;letter-spacing:0.073px">Тангрис. </i><i style="width:15.05px;letter-spacing:0.400px">– </i><i style="width:27.09px;letter-spacing:0.062px">Не </i><i style="width:53.18px;letter-spacing:0.127px">время </i><i style="width:57.19px;letter-spacing:-0.145px">сейчас </i><i style="width:98.33px;letter-spacing:0.218px">говорить… </i><i style="width:15.05px;letter-spacing:0.400px">о </i><i style="width:72.24px;letter-spacing:0.217px">многом. </i><i style="width:66.22px;letter-spacing:0.191px">Надо… </i><i style="width:107.36px;">действовать. </i><i style="width:44.15px;letter-spacing:-0.058px">Если </i><i style="width:30.10px;letter-spacing:0.187px">мы </i><i style="width:90.30px;letter-spacing:0.115px">доберёмся </i><i style="width:25.08px;letter-spacing:0.389px">до </i><i style="width:73.24px;letter-spacing:-0.011px">Илоса… </i><i style="width:27.09px;letter-spacing:0.411px">То </i><i style="width:30.10px;letter-spacing:0.187px">мы </i><i style="width:68.23px;letter-spacing:-0.009px">сможем </i><i style="width:69.23px;letter-spacing:0.059px">обрести </i><i style="width:46.15px;letter-spacing:0.258px">базу, </i><i style="width:15.05px;letter-spacing:0.400px">о </i><i style="width:72.24px;letter-spacing:0.224px">которой </i><i style="width:53.18px;letter-spacing:-0.030px">знают </i><i style="width:78.26px;letter-spacing:0.005px">слишком </i><i style="width:86.29px;letter-spacing:0.010px">немногие. </i><i style="width:36.12px;letter-spacing:0.089px">Эти </i><i style="width:69.23px;letter-spacing:0.012px">данные, </i><i style="letter-spacing:-0.307px">-</i></div>
<div class="ln" id="l37" style="top:923px;left:9.5px;"><i style="width:58.04px;letter-spacing:0.161px">взгляд </i><i style="width:79.05px;letter-spacing:-0.055px">старпома </i><i style="width:78.05px;letter-spacing:-0.021px">коснулся </i><i style="width:61.04px;letter-spacing:0.084px">ридера </i><i style="width:15.01px;letter-spacing:0.046px">и </i><i style="width:50.03px;letter-spacing:-0.138px">Таэла </i><i style="width:31.02px;letter-spacing:0.166px">без </i><i style="width:51.03px;letter-spacing:0.147px">труда </i><i style="width:97.06px;letter-spacing:-0.087px">проследила </i><i style="width:105.07px;letter-spacing:-0.170px">направление </i><i style="width:71.05px;letter-spacing:0.106px">взгляда, </i><i style="width:11.01px;letter-spacing:-0.035px">- </i><i style="width:53.03px;letter-spacing:0.194px">могут </i><i style="width:99.06px;letter-spacing:0.015px">сэкономить </i><i style="width:54.04px;letter-spacing:-0.068px">нам… </i><i style="width:63.04px;letter-spacing:0.013px">декады </i><i style="width:15.01px;letter-spacing:0.046px">и </i><i style="width:65.04px;letter-spacing:-0.039px">месяцы </i><i style="width:43.03px;letter-spacing:0.028px">пути </i><i style="width:15.01px;letter-spacing:0.046px">и </i><i style="width:81.05px;letter-spacing:0.029px">минимум </i><i style="width:65.04px;letter-spacing:-0.039px">месяцы </i><i style="width:64.04px;letter-spacing:0.160px">работы </i><i style="width:25.02px;letter-spacing:0.199px">по </i><i style="width:116.08px;letter-spacing:0.119px">обустройству </i><i style="letter-spacing:0.010px">колонии.</i></div>
<div class="ln" id="l38" style="top:944px;left:66.5px;"><i style="width:11.01px;letter-spacing:-0.035px">- </i><i style="width:30.02px;letter-spacing:0.298px">Ты </i><i style="width:55.03px;">права, </i><i style="width:68.04px;letter-spacing:0.109px">Тангри. </i><i style="width:15.01px;letter-spacing:0.379px">– </i><i style="width:78.04px;letter-spacing:0.092px">шёпотом </i><i style="width:75.04px;letter-spacing:-0.145px">ответила </i><i style="width:55.03px;letter-spacing:-0.082px">Таэла, </i><i style="width:69.04px;letter-spacing:0.036px">опуская </i><i style="width:58.03px;letter-spacing:0.161px">взгляд </i><i style="width:23.01px;letter-spacing:-0.113px">на </i><i style="width:79.04px;letter-spacing:-0.016px">экранчик </i><i style="width:61.03px;letter-spacing:0.083px">ридера </i><i style="width:15.01px;letter-spacing:0.045px">и </i><i style="width:64.04px;letter-spacing:-0.135px">касаясь </i><i style="width:60.03px;">когтем </i><i style="width:72.04px;letter-spacing:-0.040px">сенсора, </i><i style="width:161.09px;letter-spacing:-0.076px">перелистывающего </i><i style="width:87.05px;letter-spacing:-0.039px">страницы. </i><i style="width:104.06px;letter-spacing:-0.095px">Механика… </i><i style="width:77.04px;letter-spacing:-0.098px">надёжна. </i><i style="width:109.06px;letter-spacing:-0.057px">Электроника </i><i style="width:15.01px;letter-spacing:0.379px">– </i><i style="width:49.03px;letter-spacing:0.027px">тоже. </i><i style="width:18.01px;letter-spacing:-0.096px">У </i><i style="width:40.02px;letter-spacing:0.137px">них, </i><i style="width:92.05px;letter-spacing:0.226px">возможно, </i><i style="width:58.03px;letter-spacing:0.072px">разная </i><i style="letter-spacing:-0.224px">степень</i></div>
<div class="ln" id="l39" style="top:965px;left:9.5px;"><i style="width:105.00px;letter-spacing:-0.075px">надёжности. </i><i style="width:15.00px;letter-spacing:0.375px">– </i><i style="width:24.00px;letter-spacing:0.260px">О, </i><i style="letter-spacing:-0.019px">значит…</i></div>
<div id="title"></div><div id="band"></div>
<div class="rt" id="t1" style="left:939.5px;top:6.800000000000001px;font-size:11px;line-height:14px;color:#ededed;font-weight:400;letter-spacing:-0.135px;">Без имени1 - ОРФО редактор</div>
<div id="tabact"></div>
<div class="rt" id="t2" style="left:57px;top:33.0px;font-size:11.5px;line-height:14px;color:#fff;font-weight:400;letter-spacing:-0.397px;">Главная</div>
<div class="rt" id="t3" style="left:128px;top:33.0px;font-size:11.5px;line-height:14px;color:#111;font-weight:400;letter-spacing:-1.047px;">ОРФО</div>
<div class="rt" id="t4" style="left:1847px;top:31.0px;font-size:11.5px;line-height:14px;color:#fff;font-weight:400;letter-spacing:-0.541px;">Стиль</div>
<svg class="abs" style="left:0;top:0" width="1916" height="50" viewBox="0 0 1916 50">
<defs>
<linearGradient id="qg" x1="0" y1="0" x2="0" y2="1"><stop offset="0" stop-color="#a9aaac"/><stop offset=".5" stop-color="#9c9c9d"/><stop offset="1" stop-color="#a8a8a8"/></linearGradient>
<radialGradient id="og" cx=".5" cy=".35" r=".75"><stop offset="0" stop-color="#ffffff"/><stop offset=".6" stop-color="#e9e9ee"/><stop offset="1" stop-color="#b9bac4"/></radialGradient>
<linearGradient id="ob" x1="0" y1="0" x2="0" y2="1"><stop offset="0" stop-color="#2e6bb8"/><stop offset="1" stop-color="#1f4fa0"/></linearGradient>
<radialGradient id="ogr" cx=".45" cy=".3" r=".8"><stop offset="0" stop-color="#9af0a0"/><stop offset=".5" stop-color="#35d070"/><stop offset="1" stop-color="#18b27e"/></radialGradient>
<linearGradient id="pg1" x1="0" y1="0" x2="1" y2="1"><stop offset="0" stop-color="#ffffff"/><stop offset="1" stop-color="#c9cdf0"/></linearGradient>
<linearGradient id="fg1" x1="0" y1="0" x2="0" y2="1"><stop offset="0" stop-color="#ffe08a"/><stop offset="1" stop-color="#e9a820"/></linearGradient>
<linearGradient id="sg1" x1="0" y1="0" x2="1" y2="1"><stop offset="0" stop-color="#7a78e0"/><stop offset="1" stop-color="#2c2a92"/></linearGradient>
<radialGradient id="hg" cx=".4" cy=".3" r=".8"><stop offset="0" stop-color="#4a86e0"/><stop offset="1" stop-color="#143a8c"/></radialGradient>
</defs>
<!-- QAT pill -->
<path d="M31 2.5 L132 2.5 A10.5 10.5 0 0 1 132 23.5 L45 23.5 C41.5 23.5 42 11 31 2.5 Z" fill="url(#qg)" stroke="#7f8082" stroke-width="1"/>
<path d="M34 3.5 L132 3.5" stroke="#b6b7b9" stroke-width="1" fill="none"/>
<!-- orb -->
<circle cx="18.2" cy="22.2" r="18" fill="#6d6d70" opacity=".55"/>
<circle cx="18" cy="22" r="17.2" fill="url(#og)" stroke="#5c5d63" stroke-width="1"/>
<circle cx="17.6" cy="22.4" r="12.7" fill="url(#ob)"/>
<circle cx="17.6" cy="22.4" r="10.4" fill="#17607e"/>
<circle cx="17.6" cy="22.4" r="9.7" fill="url(#ogr)"/>
<path d="M10.5 21.5 L16.8 28.5 L24.6 16.5" stroke="#1e57c8" stroke-width="3.6" fill="none" stroke-linejoin="miter"/>
<path d="M10.8 19.8 L16.8 26.2 L24 15.4" stroke="#8fe8f5" stroke-width="1" fill="none" opacity=".9"/>
<!-- new doc -->
<path d="M52.5 7 L58.5 7 L61.5 10 L61.5 19.5 L52.5 19.5 Z" fill="url(#pg1)" stroke="#33364a" stroke-width=".9"/>
<path d="M58.5 7 L58.5 10 L61.5 10" fill="#e8e8f8" stroke="#33364a" stroke-width=".7"/>
<path d="M52 7 L52 19.5" stroke="#fff" stroke-width="1.2"/>
<!-- open folder -->
<path d="M71 9 L76 9 L77.5 10.5 L83 10.5 L83 19 L71 19 Z" fill="#f3c248" stroke="#b5871c" stroke-width=".6"/>
<path d="M74.5 12.5 L86 12.5 L82.5 19.2 L71 19.2 Z" fill="url(#fg1)" stroke="#a87a12" stroke-width=".6"/>
<path d="M79 8.5 Q82 5.5 85 8" stroke="#7a7c86" stroke-width=".9" fill="none"/>
<path d="M85.8 6 L85.6 9.2 L82.8 8.4 Z" fill="#7a7c86"/>
<!-- save -->
<path d="M93.5 6.5 L106.8 6.5 L106.8 19.5 L95 19.5 L93.5 18 Z" fill="url(#sg1)"/>
<rect x="96" y="7" width="8.5" height="6.2" fill="#eef0fb"/>
<rect x="97" y="15" width="6.6" height="4.5" fill="#23216e"/>
<rect x="99.8" y="15.8" width="2.4" height="3.2" fill="#f2f2ff"/>
<!-- print -->
<rect x="119" y="6" width="7" height="5" fill="#fff" stroke="#8a8d98" stroke-width=".6"/>
<path d="M115 11 L129.5 11 L130 16.5 L114.5 16.5 Z" fill="#dcdfe8" stroke="#747888" stroke-width=".7"/>
<rect x="115.5" y="13.5" width="14" height="2.2" fill="#9a9eb0"/>
<rect x="119" y="15.5" width="7" height="4.8" fill="#fff" stroke="#5a5e78" stroke-width=".7"/>
<rect x="121" y="17" width="2.2" height="1.6" fill="#4a4e90"/>
<circle cx="126.3" cy="8.2" r="2.9" fill="#3fae3a"/>
<path d="M124.8 8.2 L126 9.6 L128 6.8" stroke="#fff" stroke-width=".9" fill="none"/>
<!-- dropdown -->
<path d="M150 9.5 L155.5 9.5" stroke="#6e6f72" stroke-width="1.2"/>
<path d="M149.8 11.6 L155.8 11.6 L152.8 15 Z" fill="#6e6f72"/>
<path d="M150 10.6 L155.5 10.6" stroke="#c4c4c6" stroke-width=".8"/>
<!-- window buttons -->
<path d="M1867 16 L1873.5 16" stroke="#848587" stroke-width="1.8"/>
<path d="M1884.5 12.2 L1890 12.2 L1890 16.3 L1884.5 16.3 Z" fill="none" stroke="#848587" stroke-width="1.2"/>
<path d="M1886.3 12 L1886.3 10.8 L1892.2 10.8 L1892.2 14.8 L1890.2 14.8" fill="none" stroke="#848587" stroke-width="1.2"/>
<path d="M1903 9.8 L1910.2 16.6 M1910.2 9.8 L1903 16.6" stroke="#848587" stroke-width="1.9"/>
<!-- chevron -->
<path d="M1886 36.8 L1888.7 39.6 L1891.4 36.8" stroke="#e8e8e8" stroke-width="1" fill="none"/>
<!-- help -->
<circle cx="1904.8" cy="38" r="6.6" fill="#fff"/>
<circle cx="1904.8" cy="38" r="5.6" fill="url(#hg)"/>
<text x="1904.8" y="42" font-family="Liberation Sans, sans-serif" font-weight="700" font-size="10.5" fill="#fff" text-anchor="middle">?</text>
</svg>
<div id="ribr"></div><div id="ribbon"></div>
<div class="grp" style="left:1px;width:187px"><div class="lab"></div></div>
<div class="rt" id="t5" style="left:59px;top:123.5px;font-size:11.5px;line-height:14px;color:#fff;font-weight:400;letter-spacing:-0.031px;">Орфография</div>
<div class="grp" style="left:192px;width:180px"><div class="lab"></div></div>
<div class="rt" id="t6" style="left:249px;top:123.5px;font-size:11.5px;line-height:14px;color:#fff;font-weight:400;letter-spacing:-0.070px;">Грамматика</div>
<div class="grp" style="left:375px;width:252px"><div class="lab"></div></div>
<div class="rt" id="t7" style="left:417px;top:123.5px;font-size:11.5px;line-height:14px;color:#fff;font-weight:400;letter-spacing:0.073px;">Дополнительные инструменты</div>
<div class="grp" style="left:631px;width:252px"><div class="lab"></div></div>
<div class="rt" id="t8" style="left:741px;top:123.5px;font-size:11.5px;line-height:14px;color:#fff;font-weight:400;letter-spacing:-1.047px;">ОРФО</div>
<div class="rt" id="t9" style="left:7px;top:93.0px;font-size:11.5px;line-height:14px;color:#111;font-weight:400;letter-spacing:0.069px;">Орфография</div>
<div class="rt" id="t10" style="left:198px;top:93.0px;font-size:11.5px;line-height:14px;color:#111;font-weight:400;letter-spacing:-0.070px;">Грамматика</div>
<div class="rt" id="t11" style="left:380px;top:93.0px;font-size:11.5px;line-height:14px;color:#111;font-weight:400;letter-spacing:-0.152px;">Переносы</div>
<div class="rt" id="t12" style="left:576px;top:93.0px;font-size:11.5px;line-height:14px;color:#111;font-weight:400;letter-spacing:-0.416px;">Тезаурус</div>
<div class="rt" id="t13" style="left:637px;top:93.0px;font-size:11.5px;line-height:14px;color:#111;font-weight:400;letter-spacing:-0.069px;">Настройка</div>
<div class="rt" id="t14" style="left:103px;top:59.0px;font-size:11.5px;line-height:14px;color:#111;font-weight:400;letter-spacing:-0.096px;">Буфер обмена</div>
<div class="rt" id="t15" style="left:103px;top:81.0px;font-size:11.5px;line-height:14px;color:#111;font-weight:400;letter-spacing:0.042px;">Настройка</div>
<div class="rt" id="t16" style="left:286px;top:59.0px;font-size:11.5px;line-height:14px;color:#111;font-weight:400;letter-spacing:-0.096px;">Буфер обмена</div>
<div class="rt" id="t17" style="left:286px;top:81.0px;font-size:11.5px;line-height:14px;color:#111;font-weight:400;letter-spacing:0.042px;">Настройка</div>
<div class="rt" id="t18" style="left:459px;top:59.0px;font-size:11.5px;line-height:14px;color:#111;font-weight:400;letter-spacing:-0.030px;">Удаление переносов</div>
<div class="rt" id="t19" style="left:459px;top:81.0px;font-size:11.5px;line-height:14px;color:#111;font-weight:400;letter-spacing:-0.206px;">Формы слова</div>
<div class="rt" id="t20" style="left:459px;top:103.0px;font-size:11.5px;line-height:14px;color:#111;font-weight:400;letter-spacing:-0.250px;">Словари</div>
<div class="rt" id="t21" style="left:717px;top:59.0px;font-size:11.5px;line-height:14px;color:#111;font-weight:400;letter-spacing:0.243px;">Грамматический справочник</div>
<div class="rt" id="t22" style="left:717px;top:81.0px;font-size:11.5px;line-height:14px;color:#111;font-weight:400;letter-spacing:-0.051px;">Руководство пользователя</div>
<div class="rt" id="t23" style="left:717px;top:103.0px;font-size:11.5px;line-height:14px;color:#8d8d8d;font-weight:400;letter-spacing:-0.133px;">Вернуть текст</div>
<svg class="abs" style="left:0;top:50px" width="900" height="90" viewBox="0 50 900 90">
<defs>
<linearGradient id="bk" x1="0" y1="0" x2="1" y2="0"><stop offset="0" stop-color="#8a5a1c"/><stop offset=".3" stop-color="#d8a657"/><stop offset=".55" stop-color="#b98634"/><stop offset=".8" stop-color="#d9aa5c"/><stop offset="1" stop-color="#a87428"/></linearGradient>
<linearGradient id="dg" x1="0" y1="0" x2="0" y2="1"><stop offset="0" stop-color="#ffffff"/><stop offset="1" stop-color="#e4e6ea"/></linearGradient>
<linearGradient id="rh" x1="0" y1="0" x2="1" y2="0"><stop offset="0" stop-color="#f06a72"/><stop offset="1" stop-color="#b81824"/></linearGradient>
<radialGradient id="hg2" cx=".4" cy=".3" r=".8"><stop offset="0" stop-color="#5a8fe6"/><stop offset="1" stop-color="#15378a"/></radialGradient>
<g id="chkB"><path d="M1.4 7.8 L4.4 11.4 L10.8 1.4" stroke="#28288e" stroke-width="3.3" fill="none"/><path d="M1.4 6.6 L4.3 10 L9.8 1.2" stroke="#6a6af0" stroke-width="1.1" fill="none"/></g>
<g id="chkR"><path d="M1.4 7.6 L4.4 11.2 L10.6 1.4" stroke="#b81e48" stroke-width="3.1" fill="none"/><path d="M1.2 6.6 L4.3 10.2 L10 1.2" stroke="#f06a8c" stroke-width="1.1" fill="none"/></g>
<g id="clip"><rect x=".4" y="2.6" width="9.4" height="8.6" rx="1" fill="#f0bf4c" stroke="#c79828" stroke-width=".6"/><rect x="2.8" y="1" width="4.6" height="3" rx="1" fill="#d8a63a" stroke="#8e6a18" stroke-width=".6"/><rect x="1.8" y="5" width="6.6" height="4.8" fill="#f9dc84"/></g>
<g id="chkBs"><path d="M.9 3.6 L3.2 6.4 L6.6 1" stroke="#28288c" stroke-width="2.9" fill="none"/><path d="M1 2.6 L3.2 5 L5.8 .8" stroke="#7a7af0" stroke-width=".9" fill="none"/></g>
<g id="chkRs"><path d="M.9 3.6 L3.2 6.4 L6.6 1" stroke="#b01c44" stroke-width="2.9" fill="none"/><path d="M1 2.6 L3.2 5 L5.8 .8" stroke="#f58aa6" stroke-width=".9" fill="none"/></g>
<g id="tools"><path d="M5.2 1.2 Q2.2 .6 1.4 3 Q1 5 3.2 5.8 L10.4 11.4 Q10 14 12.2 14.8 Q14.6 15 15 12.4" fill="none" stroke="#6e7080" stroke-width="2.6"/><path d="M5.2 1.2 Q2.2 .6 1.4 3 Q1 5 3.2 5.8 L10.4 11.4 Q10 14 12.2 14.8 Q14.6 15 15 12.4" fill="none" stroke="#d4d6de" stroke-width="1.2"/></g>
</defs>
<!-- Орфография big -->
<text x="26" y="70" font-family="Liberation Serif, serif" font-size="15.5" font-weight="400" fill="#000" stroke="#000" stroke-width=".15" textLength="30" lengthAdjust="spacingAndGlyphs">ABC</text>
<path d="M37 76 L44.4 85.2 L56.4 68.4" stroke="#2c2cc0" stroke-width="5.4" fill="none"/>
<path d="M36.4 74.6 L44.2 83.6 L55.6 67.6" stroke="#5c5cf2" stroke-width="1.6" fill="none"/>
<!-- small icons group1 -->
<g transform="translate(84.5,57)"><use href="#clip"/><g transform="translate(3,2.6)"><use href="#chkB"/></g></g>
<g transform="translate(84,79.5)"><use href="#tools"/><g transform="translate(6.8,2)"><use href="#chkBs"/></g><g transform="translate(.6,8.6) scale(1.1)"><use href="#chkBs"/></g></g>
<path d="M164.4 87 L169.6 87 L167 90 Z" fill="#50525c"/>
<!-- Грамматика big -->
<rect x="217.5" y="59.5" width="23" height="29" fill="url(#dg)" stroke="#8f98a4" stroke-width="1"/>
<path d="M220 62 L238 62" stroke="#2f6fb2" stroke-width="1.6"/>
<g stroke="#7f858f" stroke-width=".9"><path d="M220 65.5 L230 65.5 M232 65.5 L238 65.5"/><path d="M220 68.5 L229 68.5 M231 68.5 L238 68.5"/><path d="M220 71.5 L232 71.5"/><path d="M220 74.5 L228 74.5"/><path d="M220 77.5 L224 77.5"/><path d="M220 80.5 L223 80.5 M235 80.5 L238 80.5"/><path d="M220 83.5 L225 83.5 M233 83.5 L238 83.5"/><path d="M220 86 L238 86" stroke="#b7bcc4"/></g>
<path d="M223.4 78.4 L229.6 85 L240 70.2" stroke="#c2244e" stroke-width="4.8" fill="none"/>
<path d="M222.8 77.2 L229.4 83.6 L239.2 69.6" stroke="#ee6a8c" stroke-width="1.4" fill="none"/>
<!-- small icons group2 -->
<g transform="translate(267,57)"><use href="#clip"/><g transform="translate(3,2.6)"><use href="#chkR"/></g></g>
<g transform="translate(266.5,79.5)"><use href="#tools"/><g transform="translate(6.8,2)"><use href="#chkRs"/></g><g transform="translate(.6,8.6) scale(1.1)"><use href="#chkRs"/></g></g>
<!-- Переносы big -->
<rect x="396.5" y="59.5" width="21" height="29" fill="url(#dg)" stroke="#a5a9b0" stroke-width="1"/>
<g stroke-width=".9"><g stroke="#8d9096"><path d="M399 62.5 L406 62.5 M399 65.5 L407 65.5 M399 68.5 L405.5 68.5 M399 71.5 L408 71.5 M399 75.5 L406 75.5 M399 78.5 L405.5 78.5 M399 81.5 L407 81.5 M399 84.5 L408 84.5"/></g><g stroke="#6d9bd0"><path d="M409 62.5 L415 62.5 M410.5 65.5 L415 65.5 M408.5 68.5 L415 68.5 M411 71.5 L415 71.5 M408 75.5 L415 75.5 M409 78.5 L415 78.5 M408.5 81.5 L415 81.5 M410.5 84.5 L415 84.5"/></g></g>
<!-- Удаление переносов -->
<g stroke-width="1.3"><path d="M447 60.5 L455.5 60.5" stroke="#4a4e60"/><path d="M448 63.2 L455.5 63.2" stroke="#c83a3a"/><path d="M447 66 L455.5 66" stroke="#4a4e60"/><path d="M441 68.6 L455.5 68.6" stroke="#c8506a"/><path d="M441 70.6 L455.5 70.6" stroke="#4a5a96"/></g>
<path d="M440.6 58.4 L449 66.6 M448.6 58.6 L441 66.6" stroke="#e24a28" stroke-width="2.1"/>
<!-- Формы слова -->
<rect x="440.5" y="80.2" width="8.6" height="3.2" fill="#2e8a7a"/><rect x="440.5" y="83.4" width="8.6" height="1" fill="#8ec6e8"/>
<path d="M440.8 85.6 Q441 90.5 445.4 91.2 L445.4 93.4 L449.6 89.8 L445.4 86.6 L445.4 88.6 Q443.4 88.4 443.2 85.6 Z" fill="#c41e3c"/>
<rect x="448.2" y="84.6" width="7.2" height="10.6" fill="#fff" stroke="#7f97c0" stroke-width=".8"/>
<path d="M449.8 87.5 L454 87.5 M449.8 89.6 L454 89.6 M449.8 91.7 L453 91.7" stroke="#55585f" stroke-width=".8"/>
<!-- Словари (owl) -->
<path d="M441.6 104.4 L444.4 106.6 Q447.6 105.2 450.8 106.6 L453.6 103.2 Q455 110 454.4 114.4 Q452 117 447.8 116.8 Q443.4 117 441.4 114.4 Q440.6 109 441.6 104.4 Z" fill="#7a4a28"/>
<path d="M443 108 Q445 106.6 447.4 109.4 Q449.6 106.6 452.6 107.6 Q453.4 111 451.6 112.6 L447.6 114.6 L443.6 112.8 Q442.2 110.6 443 108 Z" fill="#c98a4a"/>
<circle cx="445.2" cy="110" r="1.3" fill="#2a1608"/><circle cx="450.4" cy="110" r="1.3" fill="#2a1608"/>
<path d="M447 111.6 L448.6 111.6 L447.8 113.6 Z" fill="#3a200c"/>
<path d="M442.4 115 Q447.8 118 453.6 115" stroke="#4a2a12" stroke-width="1" fill="none"/>
<!-- Тезаурус book -->
<path d="M584.6 63.2 L588.8 61 L594.6 85.6 L592.6 88.4 Z" fill="#1c1a18"/>
<path d="M588.8 61 L604.2 57.8 L611.6 81.2 L594.6 85.6 Z" fill="url(#bk)" stroke="#2a2218" stroke-width=".7"/>
<path d="M594.6 85.6 L611.6 81.2 L611.4 83.6 L592.8 88.6 Z" fill="#e8e2d2" stroke="#1c1a18" stroke-width=".8"/>
<path d="M593 62 L598 83 M597.6 60.6 L603 82 M601.6 59.6 L607.4 81" stroke="#8c5e20" stroke-width=".7" opacity=".55"/>
<!-- Настройка big: wrench + screwdriver -->
<path d="M676.4 61.6 Q673 60 670.6 62.6 Q669.2 64.8 670.4 67 L655.8 81.8 Q652.4 81.4 651.2 84 Q650.6 87 653.2 88 Q656.4 88.4 657.2 85.4 Q657.4 84.4 657 83.6 L671.8 68.8 Q674.6 69.8 676.8 67.8 Q678.4 65.8 677.8 63.6 L674.8 66.4 L672.6 65.4 L672.4 63.6 Z" fill="#e4e6ea" stroke="#8a8d94" stroke-width=".8"/>
<circle cx="654" cy="85" r="1.4" fill="#c8cad0" stroke="#7c7f86" stroke-width=".6"/>
<path d="M652.2 60.6 L665.8 74.6" stroke="#f4f4f6" stroke-width="2.6"/>
<path d="M652.2 60.6 L665.8 74.6" stroke="#7f8288" stroke-width=".8" transform="translate(.9,-.9)"/>
<path d="M652.2 60.6 L665.8 74.6" stroke="#9a9da4" stroke-width=".6" transform="translate(-.9,.9)"/>
<path d="M663.6 74.2 L666.6 71.4 L679 83.8 Q680.4 86.4 678.4 88 Q676.4 89 674.4 87 Z" fill="url(#rh)" stroke="#8e1420" stroke-width=".7"/>
<path d="M666.4 73.4 L677.4 84.6" stroke="#f8a0a6" stroke-width="1" opacity=".9"/>
<!-- Грамматический справочник: compass -->
<circle cx="705.8" cy="66" r="7.8" fill="#e6e2a6" opacity=".8"/>
<circle cx="705.8" cy="66" r="6.9" fill="#8c8a2c"/>
<circle cx="705.8" cy="66" r="5" fill="#fdfdf8" stroke="#d6d08a" stroke-width=".8"/>
<path d="M702.4 62.6 L709 69.4" stroke="#1a1a2a" stroke-width="1.2"/>
<path d="M702.4 62.6 L705.6 65.8" stroke="#d84a20" stroke-width="1.2"/>
<!-- Руководство: help -->
<circle cx="706" cy="87.8" r="7.6" fill="#2a4fa0"/>
<circle cx="706" cy="87.8" r="6.6" fill="#eef2fb"/>
<circle cx="706" cy="87.8" r="5.7" fill="url(#hg2)"/>
<text x="706" y="92.2" font-family="Liberation Sans, sans-serif" font-weight="700" font-size="11.5" fill="#fff" text-anchor="middle">?</text>
<!-- Вернуть текст: undo arrow -->
<path d="M702.6 102.4 L705.6 105.2 Q712 106.4 711.4 111.4 Q710.8 115.4 705.6 117.4 L704.6 114.6 Q708 113 707.6 110.6 Q707 108.4 704.4 108.8 L704.4 111.4 L700.4 106.2 Z" fill="#f09478" opacity=".85"/>
</svg>
<div id="sep"></div><div id="strip"></div><div id="stripline"></div>
<svg class="abs" style="left:0;top:143px" width="130" height="24" viewBox="0 0 130 24"><defs><linearGradient id="tg" x1="0" y1="0" x2="0" y2="1"><stop offset="0" stop-color="#fffbb5"/><stop offset=".15" stop-color="#fff480"/><stop offset=".5" stop-color="#ffe574"/><stop offset=".75" stop-color="#ffd25e"/><stop offset="1" stop-color="#fcc24e"/></linearGradient></defs><path d="M0 22 L0 20.5 L15.5 4 Q16.5 3 18 3 L116.5 3 Q118.5 3 118.5 5 L118.5 22 Z" fill="url(#tg)" stroke="#c9b36a" stroke-width=".8"/><path d="M106 8.5 L113 15.5 M113 8.5 L106 15.5" stroke="#45401e" stroke-width="1.4" fill="none"/></svg>
<div class="rt" id="t24" style="left:31px;top:147.6px;font-size:11px;line-height:14px;color:#111;font-weight:700;letter-spacing:-0.009px;">Без имени1</div>
<svg class="abs" style="left:1898px;top:150px" width="14" height="8" viewBox="0 0 14 8"><path d="M1.5 1 L12.5 1 L7 6.5 Z" fill="#5d606c"/></svg>
<div id="lb"></div>
<div class="abs" style="left:1911px;top:167px;width:5px;height:813px;background:linear-gradient(90deg,#d9d6b0 0,#f8f6cf 1px,#fbfad8 4px,#e8e6c0 5px)"></div>
<div class="abs" style="left:0;top:975px;width:1916px;height:5px;background:linear-gradient(#d6d3c4 0,#faf8d4 1px,#faf8d4 3px,#a9a784 5px)"></div>
<div class="abs" style="left:1888px;top:167px;width:7px;height:808px;background:linear-gradient(90deg,rgba(255,255,255,0),#f1f1f1 60%,#f6f6f6)"></div>
<div class="abs" style="left:1895px;top:167px;width:16px;height:808px;background-image:conic-gradient(#fff 25%,#d4d0c8 0 50%,#fff 0 75%,#d4d0c8 0);background-size:2px 2px;"></div>
<div class="b3" style="left:1895px;top:167px;width:16px;height:16px"></div>
<div class="b3" style="left:1895px;top:959px;width:16px;height:16px"></div>
<div class="b3" style="left:1895px;top:455px;width:16px;height:85px"></div>
<svg class="abs" style="left:1895px;top:167px" width="16" height="808" viewBox="0 0 16 808"><polygon points="4.0,9.75 11.0,9.75 7.5,5.95" fill="#000"/><polygon points="4.0,798.25 11.0,798.25 7.5,802.05" fill="#000"/></svg><div id="dlg" style="left:775.6px;top:379.6px;width:362.6px;height:222.2px"></div>
<div class="abs" style="left:778px;top:382.5px;width:357px;height:17px;background:linear-gradient(90deg,#0a246a,#a6caf0)"></div>
<div class="rt" id="t25" style="left:781px;top:384.5px;font-size:11px;line-height:14px;color:#fff;font-weight:700;letter-spacing:0.211px;">Тезаурус: Русский</div>
<div class="b3" style="left:1118px;top:385px;width:15px;height:13px"><svg width="13" height="11" viewBox="0 0 13 11" style="position:absolute;left:0;top:0"><path d="M3.2 2.2 L9.2 8.2 M9.2 2.2 L3.2 8.2" stroke="#000" stroke-width="1.5"/></svg></div>
<div class="rt" id="t26" style="left:786px;top:408.0px;font-size:11.5px;line-height:14px;color:#000;font-weight:400;letter-spacing:-0.575px;">Синонимы для:</div>
<div class="rt" id="t27" style="left:961px;top:406.5px;font-size:11.5px;line-height:14px;color:#000;font-weight:400;letter-spacing:-0.492px;">Заменить антонимом:</div>
<div class="rt" id="t28" style="left:786px;top:453.5px;font-size:11.5px;line-height:14px;color:#000;font-weight:400;letter-spacing:-0.448px;">Значения:</div>
<div class="sunk" style="left:786px;top:424px;width:163.6px;height:20px"></div>
<div class="b3" style="left:933px;top:426px;width:15px;height:16.4px"><svg width="12" height="14" viewBox="0 0 12 14" style="position:absolute;left:0;top:0"><polygon points="2.5,5 9.5,5 6,8.8" fill="#000"/></svg></div>
<div class="rt" id="t29" style="left:790px;top:428.0px;font-size:11.5px;line-height:14px;color:#000;font-weight:400;letter-spacing:-1.096px;">минимум</div>
<div class="sunk" style="left:960px;top:424px;width:166px;height:19px"></div>
<div class="rt" id="t30" style="left:965.5px;top:427.5px;font-size:11.5px;line-height:14px;color:#000;font-weight:400;letter-spacing:-0.102px;">верх</div>
<div class="sunk" style="left:786px;top:469px;width:163.6px;height:93px"></div>
<div class="abs" style="left:933px;top:471px;width:15px;height:89px;background-image:conic-gradient(#fff 25%,#d4d0c8 0 50%,#fff 0 75%,#d4d0c8 0);background-size:2px 2px;"></div>
<div class="b3" style="left:933px;top:471px;width:15px;height:15px"><svg width="12" height="13" viewBox="0 0 12 13" style="position:absolute;left:0;top:0"><polygon points="2.5,8 9.5,8 6,4.2" fill="#808080"/></svg></div>
<div class="b3" style="left:933px;top:545px;width:15px;height:15px"><svg width="12" height="13" viewBox="0 0 12 13" style="position:absolute;left:0;top:0"><polygon points="2.5,4.6 9.5,4.6 6,8.4" fill="#808080"/></svg></div>
<div class="abs" style="left:788px;top:484px;width:145px;height:13px;background:#0a246a"></div>
<div class="rt" id="t31" style="left:789.5px;top:471.0px;font-size:11.5px;line-height:14px;color:#000;font-weight:400;letter-spacing:-0.270px;">мало (др.)</div>
<div class="rt" id="t32" style="left:789.5px;top:483.5px;font-size:11.5px;line-height:14px;color:#fff;font-weight:400;letter-spacing:-0.404px;">антонимы</div>
<div class="sunk" style="left:963px;top:445px;width:163.4px;height:118px"></div>
<div class="abs" style="left:1109.6px;top:447px;width:15px;height:114px;background-image:conic-gradient(#fff 25%,#d4d0c8 0 50%,#fff 0 75%,#d4d0c8 0);background-size:2px 2px;"></div>
<div class="b3" style="left:1109.6px;top:447.6px;width:15px;height:15px"><svg width="12" height="13" viewBox="0 0 12 13" style="position:absolute;left:0;top:0"><polygon points="2.5,8 9.5,8 6,4.2" fill="#808080"/></svg></div>
<div class="b3" style="left:1109.6px;top:546.4px;width:15px;height:15px"><svg width="12" height="13" viewBox="0 0 12 13" style="position:absolute;left:0;top:0"><polygon points="2.5,4.6 9.5,4.6 6,8.4" fill="#808080"/></svg></div>
<div class="abs" style="left:965px;top:447px;width:144px;height:13px;background:#0a246a"></div>
<div class="rt" id="t33" style="left:966.5px;top:446.6px;font-size:11.5px;line-height:14px;color:#fff;font-weight:400;letter-spacing:0.165px;">верх (ант.)</div>
<div class="rt" id="t34" style="left:966.5px;top:459.6px;font-size:11.5px;line-height:14px;color:#000;font-weight:400;letter-spacing:0.128px;">верхушку (ант.)</div>
<div class="rt" id="t35" style="left:966.5px;top:472.6px;font-size:11.5px;line-height:14px;color:#000;font-weight:400;letter-spacing:0.077px;">верхушка (ант.)</div>
<div class="rt" id="t36" style="left:966.5px;top:485.6px;font-size:11.5px;line-height:14px;color:#000;font-weight:400;letter-spacing:-0.022px;">вершину (ант.)</div>
<div class="rt" id="t37" style="left:966.5px;top:498.6px;font-size:11.5px;line-height:14px;color:#000;font-weight:400;letter-spacing:-0.069px;">вершина (ант.)</div>
<div class="rt" id="t38" style="left:966.5px;top:511.6px;font-size:11.5px;line-height:14px;color:#000;font-weight:400;letter-spacing:-0.267px;">максимум (ант.)</div>
<div class="b3" style="left:786px;top:570px;width:80px;height:22px"></div>
<div class="rt" id="t39" style="left:801px;top:574.5px;font-size:11.5px;line-height:14px;color:#000;font-weight:400;letter-spacing:-0.461px;">Заменить</div>
<div class="b3" style="left:873px;top:570px;width:80px;height:22px"></div>
<div class="rt" id="t40" style="left:896px;top:574.5px;font-size:11.5px;line-height:14px;color:#000;font-weight:400;letter-spacing:-0.175px;">Поиск</div>
<div class="b3" style="left:960px;top:570px;width:80px;height:22px"></div>
<div class="rt" id="t41" style="left:979px;top:574.5px;font-size:11.5px;line-height:14px;color:#8a8780;font-weight:400;text-shadow:1px 1px 0 #fff;letter-spacing:-0.404px;">Вернуть</div>
<div class="b3" style="left:1047px;top:570px;width:80px;height:22px"></div>
<div class="rt" id="t42" style="left:1068px;top:574.5px;font-size:11.5px;line-height:14px;color:#000;font-weight:400;letter-spacing:-0.711px;">Отмена</div><div class="abs" style="left:1770px;top:230px;width:146px;height:109px;background:linear-gradient(rgba(12,118,199,.86) 0,rgba(45,140,208,.84) 30%,rgba(120,178,226,.79) 62%,rgba(200,219,239,.75) 88%,rgba(212,226,242,.75) 100%)"></div>
<svg class="abs" style="left:1770px;top:230px" width="146" height="109" viewBox="0 0 146 109">
<path d="M0 109 L0 103 L2 101 L3 103 L5 100 L7 103 L9 101 L11 103 L13 100 L15 104 L17 101 L19 103 L22 100 L24 103 L26 101 L29 103 L31 100 L33 103 L36 101 L38 103 L41 100 L43 103 L46 101 L48 103 L51 100 L53 103 L56 101 L58 103 L61 100 L63 103 L66 101 L69 103 L71 100 L74 103 L76 101 L79 103 L82 100 L84 103 L87 101 L89 103 L92 100 L95 103 L97 101 L100 103 L103 100 L105 103 L108 101 L111 103 L113 100 L116 103 L119 101 L121 103 L124 100 L126 103 L129 101 L132 103 L134 100 L137 103 L140 101 L142 103 L146 100 L146 109 Z" fill="#3fe338"/>
<path d="M15.2 109 L15.8 88 L16.6 88 L17.4 109 Z" fill="#e6f04a"/>
<path d="M55 109 L56.4 54 L57 54 L58.6 109 Z" fill="#38d83a"/><path d="M56 109 L56.6 92 L57.2 92 L57.8 109 Z" fill="#f0f050"/>
<path d="M97.4 109 L98.4 85 L99 85 L100 109 Z" fill="#8be04a"/>
<path d="M125.6 109 L126 0 L127.6 0 L128 109 Z" fill="#d8f07a"/><path d="M126.5 109 L126.6 0 L127.1 0 L127.2 109 Z" fill="#6ed84a"/>
<path d="M137.4 109 L138.2 90 L138.8 90 L139.6 109 Z" fill="#c8ea4a"/>
<rect x="120" y="100" width="1.2" height="2" fill="#e03030"/>
</svg>
<div class="abs" style="left:1770px;top:341px;width:150px;height:10px;background:#fff;border:1px solid #333"></div>
<div class="rt" id="t43" style="left:1806px;top:341.0px;font-size:11px;line-height:10px;color:#222;font-weight:400;letter-spacing:0.351px;">взял: 14.6 отдал: 7.3</div>
</body>
</html>
